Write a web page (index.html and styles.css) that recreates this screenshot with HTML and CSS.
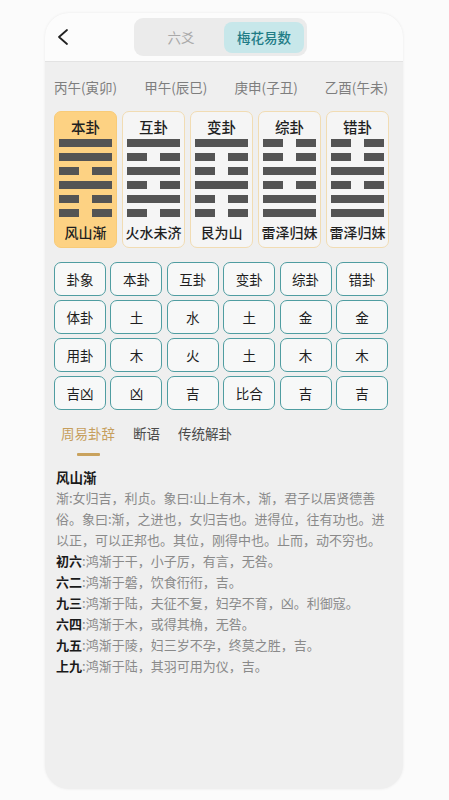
FILE: index.html
```html
<!DOCTYPE html>
<html lang="zh-CN">
<head>
<meta charset="utf-8">
<title>梅花易数</title>
<link rel="stylesheet" href="styles.css">
</head>
<body>
<div class="phone">
  <header class="header">
    <svg class="back" width="14" height="18" viewBox="0 0 14 18"><path d="M10 2 L2 9 L10 16" fill="none" stroke="#222" stroke-width="1.8" stroke-linecap="round" stroke-linejoin="round"/></svg>
    <div class="segment">
      <span class="seg-item">六爻</span>
      <span class="seg-item active">梅花易数</span>
    </div>
  </header>

  <div class="dates">
    <span>丙午(寅卯)</span>
    <span>甲午(辰巳)</span>
    <span>庚申(子丑)</span>
    <span>乙酉(午未)</span>
  </div>

  <div class="cards">
    <div class="card main">
      <div class="card-title">本卦</div>
      <div class="lines">
        <i class="yang"></i><i class="yang"></i><i class="yin"><b></b><b></b></i><i class="yang"></i><i class="yin"><b></b><b></b></i><i class="yin"><b></b><b></b></i>
      </div>
      <div class="card-name">风山渐</div>
    </div>
    <div class="card">
      <div class="card-title">互卦</div>
      <div class="lines">
        <i class="yang"></i><i class="yin"><b></b><b></b></i><i class="yang"></i><i class="yin"><b></b><b></b></i><i class="yang"></i><i class="yin"><b></b><b></b></i>
      </div>
      <div class="card-name">火水未济</div>
    </div>
    <div class="card">
      <div class="card-title">变卦</div>
      <div class="lines">
        <i class="yang"></i><i class="yin"><b></b><b></b></i><i class="yin"><b></b><b></b></i><i class="yang"></i><i class="yin"><b></b><b></b></i><i class="yin"><b></b><b></b></i>
      </div>
      <div class="card-name">艮为山</div>
    </div>
    <div class="card">
      <div class="card-title">综卦</div>
      <div class="lines">
        <i class="yin"><b></b><b></b></i><i class="yin"><b></b><b></b></i><i class="yang"></i><i class="yin"><b></b><b></b></i><i class="yang"></i><i class="yang"></i>
      </div>
      <div class="card-name">雷泽归妹</div>
    </div>
    <div class="card">
      <div class="card-title">错卦</div>
      <div class="lines">
        <i class="yin"><b></b><b></b></i><i class="yin"><b></b><b></b></i><i class="yang"></i><i class="yin"><b></b><b></b></i><i class="yang"></i><i class="yang"></i>
      </div>
      <div class="card-name">雷泽归妹</div>
    </div>
  </div>

  <div class="grid">
    <div class="cell">卦象</div><div class="cell">本卦</div><div class="cell">互卦</div><div class="cell">变卦</div><div class="cell">综卦</div><div class="cell">错卦</div>
    <div class="cell">体卦</div><div class="cell">土</div><div class="cell">水</div><div class="cell">土</div><div class="cell">金</div><div class="cell">金</div>
    <div class="cell">用卦</div><div class="cell">木</div><div class="cell">火</div><div class="cell">土</div><div class="cell">木</div><div class="cell">木</div>
    <div class="cell">吉凶</div><div class="cell">凶</div><div class="cell">吉</div><div class="cell">比合</div><div class="cell">吉</div><div class="cell">吉</div>
  </div>

  <div class="tabs">
    <div class="tab active">周易卦辞<span class="bar"></span></div>
    <div class="tab">断语</div>
    <div class="tab">传统解卦</div>
  </div>

  <div class="content">
    <div class="heading">风山渐</div>
    <p class="para">渐:女归吉，利贞。象曰:山上有木，渐，君子以居贤德善俗。象曰:渐，之进也，女归吉也。进得位，往有功也。进以正，可以正邦也。其位，刚得中也。止而，动不穷也。</p>
    <p class="para"><b>初六</b>:鸿渐于干，小子厉，有言，无咎。</p>
    <p class="para"><b>六二</b>:鸿渐于磐，饮食衎衎，吉。</p>
    <p class="para"><b>九三</b>:鸿渐于陆，夫征不复，妇孕不育，凶。利御寇。</p>
    <p class="para"><b>六四</b>:鸿渐于木，或得其桷，无咎。</p>
    <p class="para"><b>九五</b>:鸿渐于陵，妇三岁不孕，终莫之胜，吉。</p>
    <p class="para"><b>上九</b>:鸿渐于陆，其羽可用为仪，吉。</p>
  </div>
</div>
</body>
</html>
```

FILE: styles.css
```css
* { box-sizing: border-box; }
html, body { margin: 0; padding: 0; }
body {
  background: #fbfbfb;
  font-family: "Noto Sans CJK SC", "Noto Sans", sans-serif;
  width: 449px;
  height: 800px;
  overflow: hidden;
}
.phone {
  margin: 13px 0 0 45px;
  width: 358px;
  height: 776px;
  border-radius: 24px;
  background: #efefef;
  overflow: hidden;
  box-shadow: 0 0 3px rgba(0,0,0,0.07);
}
.header {
  height: 49px;
  background: #fcfcfc;
  border-bottom: 1px solid #e3e3e3;
  display: flex;
  align-items: center;
}
.back { margin-left: 12px; display: block; }
.segment {
  margin-left: 63px;
  width: 173px;
  height: 38px;
  background: #ebebeb;
  border-radius: 9px;
  display: flex;
  align-items: center;
  padding: 0 3px 0 4px;
}
.seg-item {
  flex: 1;
  text-align: center;
  font-size: 13.5px;
  color: #a9a9a9;
}
.seg-item.active {
  flex: 0 0 80px;
  height: 31px;
  line-height: 31px;
  border-radius: 8px;
  background: #c7e7ea;
  color: #1f7c86;
  font-weight: 500;
}
.dates {
  height: 49px;
  display: flex;
  align-items: center;
  justify-content: space-between;
  padding: 0 15px 0 9px;
  font-size: 13.5px;
  color: #7e7e7e;
}
.cards {
  display: flex;
  gap: 5px;
  padding-left: 9px;
}
.card {
  width: 63px;
  height: 137px;
  border: 1.5px solid #f1dcb3;
  border-radius: 7px;
  background: #f5f5f5;
  display: flex;
  flex-direction: column;
  align-items: center;
}
.card.main {
  background: #fdd283;
  border-color: #f8cb78;
}
.card-title {
  height: 27px;
  padding-top: 3px;
  line-height: 24px;
  font-size: 14.5px;
  font-weight: 500;
  color: #1f1f1f;
}
.lines {
  width: 53px;
  display: flex;
  flex-direction: column;
  gap: 6px;
}
.lines i { display: flex; height: 8px; justify-content: space-between; }
.lines i.yang { background: #545454; }
.lines b { width: 20px; height: 8px; background: #545454; }
.card-name {
  height: 30px;
  line-height: 30px;
  font-size: 14px;
  font-weight: 500;
  color: #1f1f1f;
  white-space: nowrap;
}
.grid {
  margin-top: 14px;
  padding-left: 9px;
  display: grid;
  grid-template-columns: repeat(6, 52px);
  column-gap: 4.4px;
  row-gap: 4px;
}
.cell {
  height: 34px;
  border: 1.5px solid #4f9da1;
  border-radius: 7px;
  background: #f7f8f8;
  display: flex;
  align-items: center;
  justify-content: center;
  font-size: 13.5px;
  color: #1e1e1e;
}
.tabs {
  margin-top: 13px;
  padding-left: 16px;
  display: flex;
  gap: 18px;
}
.tab {
  font-size: 13.5px;
  line-height: 20px;
  color: #4a4a4a;
  height: 36px;
  display: flex;
  flex-direction: column;
  align-items: center;
}
.tab.active { color: #c69e5c; }
.tab .bar {
  margin-top: 10px;
  width: 23px;
  height: 3px;
  background: #c9a25d;
  border-radius: 1px;
}
.content {
  margin-top: 8px;
  padding-left: 11px;
  width: 343px;
  font-size: 13px;
  line-height: 21px;
  color: #8a8a8a;
}
.heading {
  font-weight: 700;
  color: #1a1a1a;
  font-size: 13.5px;
  line-height: 20px;
}
.para { margin: 0; }
.para b { color: #1a1a1a; font-weight: 700; }
```
